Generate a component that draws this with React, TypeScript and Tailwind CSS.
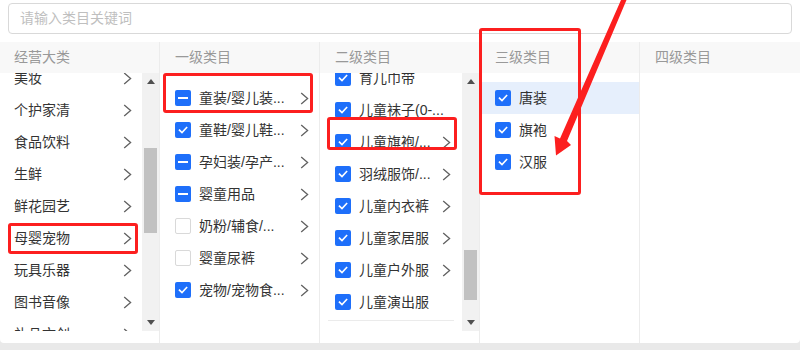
import React from "react";

type CheckState = "checked" | "indeterminate" | "unchecked";

const BLUE = "bg-[#1e6ffa]";

function Checkbox({ state }: { state: CheckState }) {
  if (state === "unchecked") {
    return <span className="block w-4 h-4 shrink-0 rounded-[2px] border border-[#d9d9d9] bg-white" />;
  }
  return (
    <span className={`flex items-center justify-center w-4 h-4 shrink-0 rounded-[2px] ${BLUE}`}>
      {state === "checked" ? (
        <svg width="12" height="12" viewBox="0 0 12 12">
          <polyline points="2.5,6.2 5,8.6 9.6,3.6" fill="none" stroke="#fff" strokeWidth="1.6" strokeLinecap="square" />
        </svg>
      ) : (
        <span className="block w-[10px] h-[2px] bg-white" />
      )}
    </span>
  );
}

function Chevron() {
  return (
    <svg width="9" height="13" viewBox="0 0 9 13" className="shrink-0">
      <polyline points="1.2,1 7.6,6.5 1.2,12" fill="none" stroke="#606060" strokeWidth="1.3" />
    </svg>
  );
}

function Scrollbar({ thumbClass }: { thumbClass: string }) {
  return (
    <div className="w-[17px] shrink-0 bg-[#f1f1f1] flex flex-col">
      <div className="h-[17px] flex items-center justify-center">
        <svg width="8" height="5" viewBox="0 0 8 5">
          <polygon points="0,5 8,5 4,0" fill="#505050" />
        </svg>
      </div>
      <div className="flex-1">
        <div className={`mx-[2px] bg-[#c1c1c1] ${thumbClass}`} />
      </div>
      <div className="h-[17px] flex items-center justify-center">
        <svg width="8" height="5" viewBox="0 0 8 5">
          <polygon points="0,0 8,0 4,5" fill="#505050" />
        </svg>
      </div>
    </div>
  );
}

function Header({ title }: { title: string }) {
  return (
    <div className="h-[31px] bg-[#f8f8f8] flex items-center pl-[15px] text-[14px] text-[#999]">{title}</div>
  );
}

const col1 = ["美妆", "个护家清", "食品饮料", "生鲜", "鲜花园艺", "母婴宠物", "玩具乐器", "图书音像", "礼品文创"];

const col2: { t: string; s: CheckState }[] = [
  { t: "童装/婴儿装...", s: "indeterminate" },
  { t: "童鞋/婴儿鞋...", s: "checked" },
  { t: "孕妇装/孕产...", s: "indeterminate" },
  { t: "婴童用品", s: "indeterminate" },
  { t: "奶粉/辅食/...", s: "unchecked" },
  { t: "婴童尿裤", s: "unchecked" },
  { t: "宠物/宠物食...", s: "checked" },
];

const col3: { t: string; c: boolean }[] = [
  { t: "育儿巾带", c: false },
  { t: "儿童袜子(0-...", c: false },
  { t: "儿童旗袍/...", c: true },
  { t: "羽绒服饰/...", c: true },
  { t: "儿童内衣裤", c: true },
  { t: "儿童家居服", c: true },
  { t: "儿童户外服", c: true },
  { t: "儿童演出服", c: false },
];

const col4 = ["唐装", "旗袍", "汉服"];

export default function App() {
  return (
    <div
      className="w-[800px] h-[350px] bg-[#e9e9e9] overflow-hidden text-[#333]"
      style={{ fontFamily: '"Liberation Sans", "Noto Sans CJK SC", sans-serif' }}
    >
      <div className="relative h-[343px] bg-white rounded-b-[4px] flex flex-col">
        <div className="mx-[8px] mt-[3px] h-[31px] border border-[#d9d9d9] rounded-[4px] flex items-center pl-[11px] text-[14px] text-[#bfbfbf]">
          请输入类目关键词
        </div>
        <div className="mt-[8px] flex-1 flex">
          {/* 经营大类 */}
          <div className="w-[160px] border-r border-[#ececec] flex flex-col">
            <div className="h-[31px] bg-[#f8f8f8] flex items-center pl-[14px] text-[14px] text-[#999]">经营大类</div>
            <div className="h-[258px] flex">
              <div className="flex-1 overflow-hidden">
                <div className="-mt-[11px]">
                  {col1.map((t) => (
                    <div key={t} className="h-[32px] flex items-center justify-between pl-[14px] pr-[10px] text-[14px]">
                      <span>{t}</span>
                      <Chevron />
                    </div>
                  ))}
                </div>
              </div>
              <Scrollbar thumbClass="mt-[58px] h-[85px]" />
            </div>
          </div>
          {/* 一级类目 */}
          <div className="w-[160px] border-r border-[#ececec] flex flex-col">
            <Header title="一级类目" />
            <div className="pt-[9px]">
              {col2.map((it) => (
                <div key={it.t} className="h-[32px] flex items-center pl-[15px] pr-[10px] gap-[8px] text-[14px]">
                  <Checkbox state={it.s} />
                  <span className="flex-1 whitespace-nowrap">{it.t}</span>
                  <Chevron />
                </div>
              ))}
            </div>
          </div>
          {/* 二级类目 */}
          <div className="w-[160px] border-r border-[#ececec] flex flex-col">
            <Header title="二级类目" />
            <div className="h-[258px] flex">
              <div className="flex-1 overflow-hidden">
                <div className="-mt-[11px]">
                  {col3.map((it) => (
                    <div key={it.t} className="h-[32px] flex items-center pl-[15px] pr-[11px] gap-[8px] text-[14px]">
                      <Checkbox state="checked" />
                      <span className="flex-1 whitespace-nowrap">{it.t}</span>
                      {it.c && <Chevron />}
                    </div>
                  ))}
                  <div className="mt-[2px] mx-[8px] h-px bg-[#ebebeb]" />
                </div>
              </div>
              <Scrollbar thumbClass="mt-[160px] h-[50px]" />
            </div>
          </div>
          {/* 三级类目 */}
          <div className="w-[160px] border-r border-[#ececec] flex flex-col">
            <Header title="三级类目" />
            <div className="pt-[9px]">
              {col4.map((t, i) => (
                <div
                  key={t}
                  className={`h-[32px] flex items-center pl-[15px] gap-[8px] text-[14px] ${i === 0 ? "bg-[#e6effc]" : ""}`}
                >
                  <Checkbox state="checked" />
                  <span>{t}</span>
                </div>
              ))}
            </div>
          </div>
          {/* 四级类目 */}
          <div className="flex-1 flex flex-col">
            <Header title="四级类目" />
          </div>
        </div>

        {/* red annotations */}
        <div className="absolute left-[8px] top-[223px] w-[130px] h-[31px] border-[3px] border-[#fc1f1f] rounded-[3px] pointer-events-none" />
        <div className="absolute left-[163px] top-[73px] w-[150px] h-[40px] border-[3px] border-[#fc1f1f] rounded-[3px] pointer-events-none" />
        <div className="absolute left-[327px] top-[117px] w-[130px] h-[33px] border-[3px] border-[#fc1f1f] rounded-[3px] pointer-events-none" />
        <div className="absolute left-[479px] top-[28px] w-[102px] h-[167px] border-[3px] border-[#fc1f1f] rounded-[3px] pointer-events-none" />
        <svg className="absolute left-0 top-0 pointer-events-none" width="800" height="343" viewBox="0 0 800 343">
          <polygon
            points="621,0 626.5,0 567,141 571,145 556,155.5 554.5,136 560,138.5"
            fill="#fc1f1f"
          />
        </svg>
      </div>
    </div>
  );
}
